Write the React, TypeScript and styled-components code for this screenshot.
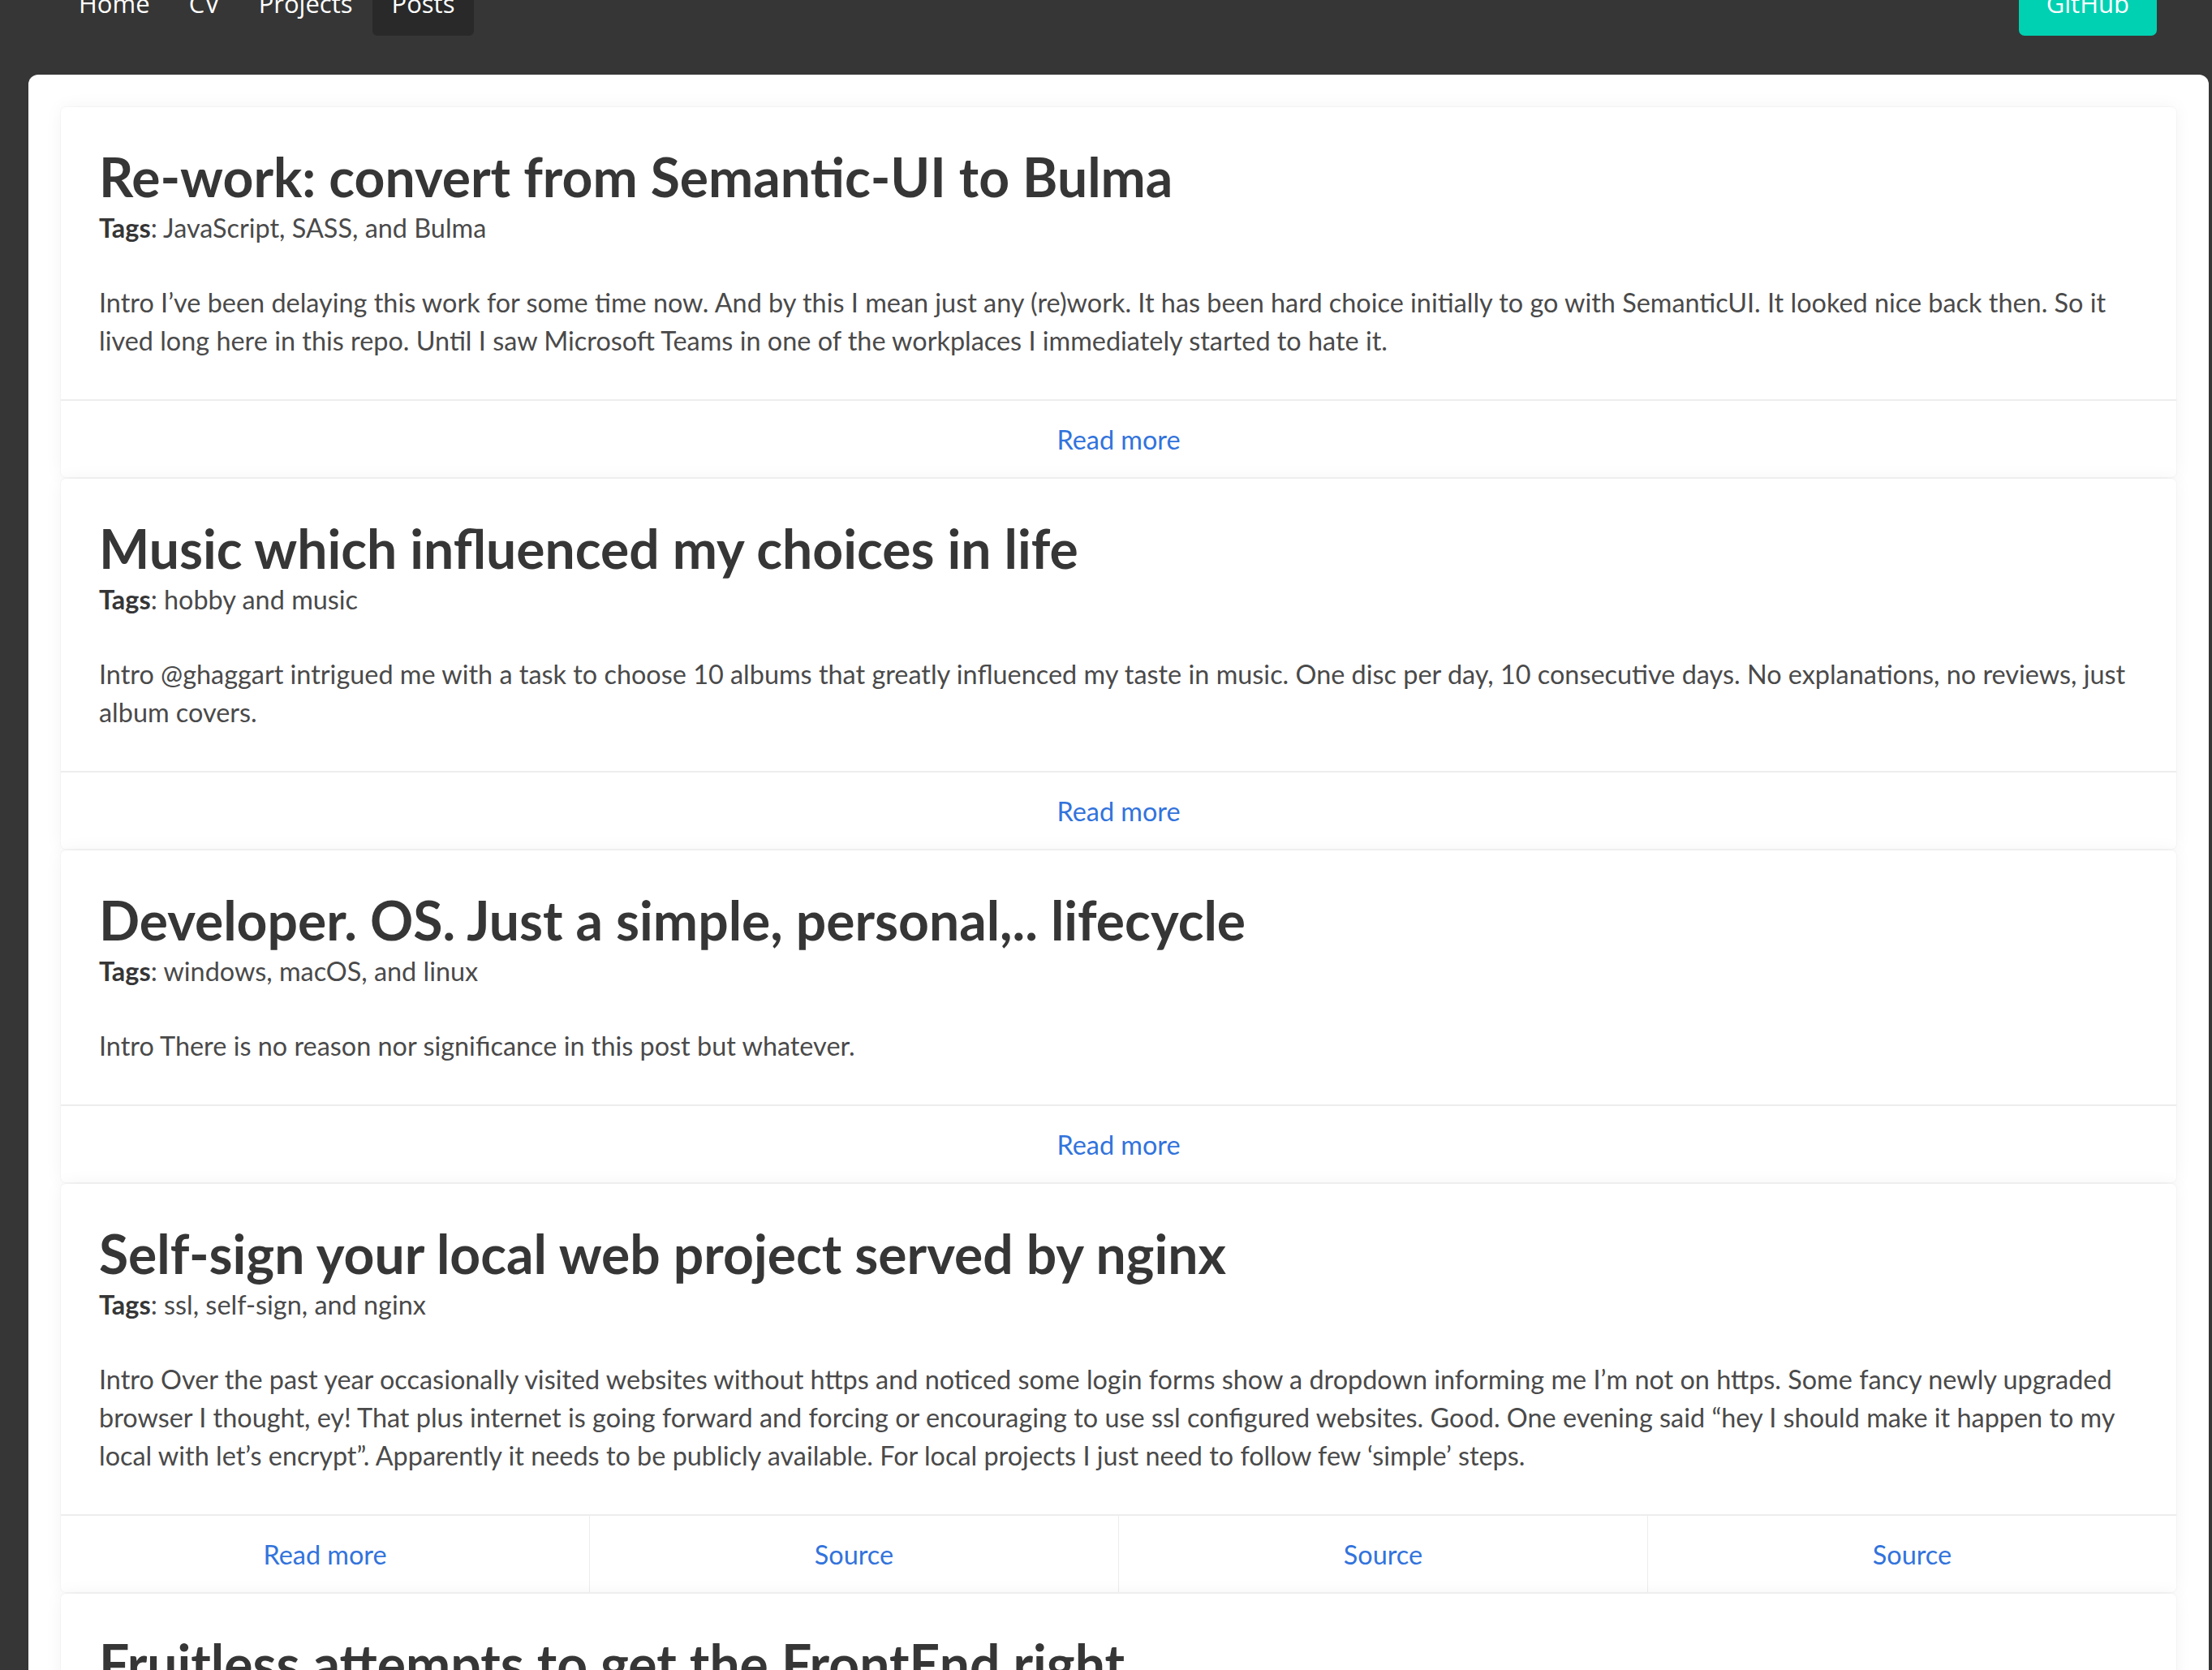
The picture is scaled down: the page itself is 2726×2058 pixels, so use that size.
import React from "react";
import styled, { createGlobalStyle } from "styled-components";

const GlobalStyle = createGlobalStyle`
    html, body {
        margin: 0;
        padding: 0;
        background: #363636;
        overflow: hidden;
    }
    body {
        font-family: Lato, "Open Sans", sans-serif;
        color: #4a4a4a;
    }
`;

type Post = {
    title: string;
    tags: string;
    intro: string;
    sources?: number;
};

const posts: Post[] = [
    {
        title: "Re-work: convert from Semantic-UI to Bulma",
        tags: "JavaScript, SASS, and Bulma",
        intro: "Intro I’ve been delaying this work for some time now. And by this I mean just any (re)work. It has been hard choice initially to go with SemanticUI. It looked nice back then. So it lived long here in this repo. Until I saw Microsoft Teams in one of the workplaces I immediately started to hate it.",
    },
    {
        title: "Music which influenced my choices in life",
        tags: "hobby and music",
        intro: "Intro @ghaggart intrigued me with a task to choose 10 albums that greatly influenced my taste in music. One disc per day, 10 consecutive days. No explanations, no reviews, just album covers.",
    },
    {
        title: "Developer. OS. Just a simple, personal,.. lifecycle",
        tags: "windows, macOS, and linux",
        intro: "Intro There is no reason nor significance in this post but whatever.",
    },
    {
        title: "Self-sign your local web project served by nginx",
        tags: "ssl, self-sign, and nginx",
        intro: "Intro Over the past year occasionally visited websites without https and noticed some login forms show a dropdown informing me I’m not on https. Some fancy newly upgraded browser I thought, ey! That plus internet is going forward and forcing or encouraging to use ssl configured websites. Good. One evening said “hey I should make it happen to my local with let’s encrypt”. Apparently it needs to be publicly available. For local projects I just need to follow few ‘simple’ steps.",
        sources: 3,
    },
];

// page is shown scrolled a little, the navbar top sits above the frame
const Page = styled.div`
    margin-top: -46px;
`;

const Navbar = styled.nav`
    height: 90px;
    display: flex;
    align-items: stretch;
    justify-content: space-between;
    padding: 0 68px 0 73px;
    font-family: "Open Sans", sans-serif;
    font-size: 31px;
`;

const NavMenu = styled.div`
    display: flex;
    align-items: stretch;
`;

const NavItem = styled.a<{ $active?: boolean }>`
    display: block;
    padding: 11px 24px 0;
    line-height: 79px;
    color: #ffffff;
    text-decoration: none;
    border-radius: 0 0 6px 6px;
    background: ${(p) => (p.$active ? "#292929" : "transparent")};
`;

const GithubButton = styled.a`
    display: block;
    padding: 11px 34px 0;
    line-height: 79px;
    color: #ffffff;
    background: #00d1b2;
    border-radius: 0 0 7px 7px;
    text-decoration: none;
`;

const Container = styled.main`
    margin: 48px 4px 0 35px;
    background: #ffffff;
    border-radius: 12px 12px 0 0;
    padding: 40px;
    display: flex;
    flex-direction: column;
    gap: 2px;
    min-height: 2000px;
`;

const Card = styled.article`
    background: #ffffff;
    border-radius: 6px;
    box-shadow: 0 0 22px rgba(10, 10, 10, 0.05), 0 0 0 1px rgba(10, 10, 10, 0.025);
`;

const CardContent = styled.div`
    padding: 49px 47px 49px;
`;

const Title = styled.h2`
    margin: 0 0 2px;
    font-size: 66px;
    line-height: 74px;
    font-weight: 700;
    color: #363636;
`;

const Tags = styled.p`
    margin: 0 0 45px;
    font-size: 32.4px;
    line-height: 47px;
    b {
        color: #363636;
        font-weight: 700;
    }
`;

const Intro = styled.p`
    margin: 0;
    font-size: 32.4px;
    line-height: 47px;
`;

const CardFooter = styled.footer`
    display: flex;
    border-top: 2px solid #ededed;
`;

const FooterItem = styled.a`
    flex: 1;
    height: 94px;
    display: flex;
    align-items: center;
    justify-content: center;
    font-size: 32.4px;
    color: #3273dc;
    text-decoration: none;
    & + & {
        border-left: 1px solid #ededed;
    }
`;

const PostCard = ({ post }: { post: Post }) => (
    <Card>
        <CardContent>
            <Title>{post.title}</Title>
            <Tags>
                <b>Tags</b>: {post.tags}
            </Tags>
            <Intro>{post.intro}</Intro>
        </CardContent>
        <CardFooter>
            <FooterItem href="#">Read more</FooterItem>
            {Array.from({ length: post.sources ?? 0 }).map((_, i) => (
                <FooterItem key={i} href="#">Source</FooterItem>
            ))}
        </CardFooter>
    </Card>
);

export default function App() {
    return (
        <Page>
            <GlobalStyle />
            <Navbar>
                <NavMenu>
                    <NavItem href="#">Home</NavItem>
                    <NavItem href="#">CV</NavItem>
                    <NavItem href="#">Projects</NavItem>
                    <NavItem href="#" $active>Posts</NavItem>
                </NavMenu>
                <GithubButton href="#">GitHub</GithubButton>
            </Navbar>
            <Container>
                {posts.map((p) => (
                    <PostCard key={p.title} post={p} />
                ))}
                <Card>
                    <CardContent>
                        <Title>Fruitless attempts to get the FrontEnd right</Title>
                    </CardContent>
                </Card>
            </Container>
        </Page>
    );
}
